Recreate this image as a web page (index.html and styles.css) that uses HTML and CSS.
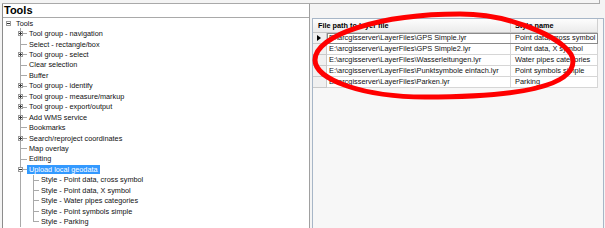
FILE: index.html
```html
<!DOCTYPE html>
<html>
<head>
<meta charset="utf-8">
<title>Tools</title>
<link rel="stylesheet" href="styles.css">
</head>
<body>
<div class="cap"></div>
<div class="main">
  <div class="left">
    <div class="title">Tools</div>
    <div class="tree">
      <div class="row root"><span class="box minus"></span><span class="label">Tools</span></div>
      <div class="row l1 has-box"><span class="box plus"></span><span class="label">Tool group - navigation</span></div>
      <div class="row l1"><span class="label">Select - rectangle/box</span></div>
      <div class="row l1 has-box"><span class="box plus"></span><span class="label">Tool group - select</span></div>
      <div class="row l1"><span class="label">Clear selection</span></div>
      <div class="row l1"><span class="label">Buffer</span></div>
      <div class="row l1 has-box"><span class="box plus"></span><span class="label">Tool group - identify</span></div>
      <div class="row l1 has-box"><span class="box plus"></span><span class="label">Tool group - measure/markup</span></div>
      <div class="row l1 has-box"><span class="box plus"></span><span class="label">Tool group - export/output</span></div>
      <div class="row l1 has-box"><span class="box plus"></span><span class="label">Add WMS service</span></div>
      <div class="row l1"><span class="label">Bookmarks</span></div>
      <div class="row l1 has-box"><span class="box plus"></span><span class="label">Search/reproject coordinates</span></div>
      <div class="row l1"><span class="label">Map overlay</span></div>
      <div class="row l1"><span class="label">Editing</span></div>
      <div class="row l1 has-box"><span class="box minus"></span><span class="label selected">Upload local geodata</span></div>
      <div class="row l2"><span class="label">Style - Point data, cross symbol</span></div>
      <div class="row l2"><span class="label">Style - Point data, X symbol</span></div>
      <div class="row l2"><span class="label">Style - Water pipes categories</span></div>
      <div class="row l2"><span class="label">Style - Point symbols simple</span></div>
      <div class="row l2 last"><span class="label">Style - Parking</span></div>
    </div>
  </div>
  <div class="right">
    <div class="grid">
      <div class="ghead">
        <div class="hc c1">File path to layer file</div>
        <div class="hc c2">Style name</div>
      </div>
      <div class="grow cur">
        <div class="rh"><span class="arrow"></span></div>
        <div class="data">
          <div class="cell c1">E:\arcgisserver\LayerFiles\GPS Simple.lyr</div>
          <div class="cell c2">Point data, cross symbol</div>
        </div>
      </div>
      <div class="grow">
        <div class="rh"></div>
        <div class="data">
          <div class="cell c1">E:\arcgisserver\LayerFiles\GPS Simple2.lyr</div>
          <div class="cell c2">Point data, X symbol</div>
        </div>
      </div>
      <div class="grow">
        <div class="rh"></div>
        <div class="data">
          <div class="cell c1">E:\arcgisserver\LayerFiles\Wasserleitungen.lyr</div>
          <div class="cell c2">Water pipes categories</div>
        </div>
      </div>
      <div class="grow">
        <div class="rh"></div>
        <div class="data">
          <div class="cell c1">E:\arcgisserver\LayerFiles\Punktsymbole einfach.lyr</div>
          <div class="cell c2">Point symbols simple</div>
        </div>
      </div>
      <div class="grow">
        <div class="rh"></div>
        <div class="data">
          <div class="cell c1">E:\arcgisserver\LayerFiles\Parken.lyr</div>
          <div class="cell c2">Parking</div>
        </div>
      </div>
    </div>
  </div>
</div>
<svg class="mark" width="605" height="228" viewBox="0 0 605 228" xmlns="http://www.w3.org/2000/svg">
  <path d="M 315 60 C 315 80, 364 97, 425 97 C 520 97, 573 86, 573 61 C 573 42, 515 14, 460 14 C 380 14, 315 35, 315 60 Z" fill="none" stroke="#ff0000" stroke-width="5"/>
</svg>
</body>
</html>
```
FILE: styles.css
```css
* {
  box-sizing: border-box;
}

html,
body {
  margin: 0;
}

body {
  width: 605px;
  height: 228px;
  overflow: hidden;
  position: relative;
  background: #f4f4f4;
  font-family: "Liberation Sans", Arial, sans-serif;
  color: #111;
}

.cap {
  margin-left: 2px;
  width: 598px;
  height: 4px;
  border-right: 1px solid #a9a9a9;
  border-bottom: 1px solid #a9a9a9;
}

.main {
  display: flex;
  padding-left: 2px;
  height: 224px;
}

/* left panel */
.left {
  width: 308px;
  background: #ffffff;
  border-left: 1px solid #8c8c8c;
  border-right: 1px solid #a0a0a0;
  display: flex;
  flex-direction: column;
}

.title {
  height: 14px;
  border-bottom: 1px solid #a9a9a9;
  font-weight: bold;
  font-size: 11px;
  line-height: 13px;
  padding-left: 1px;
  color: #000;
}

.tree {
  font-size: 7.3px;
  color: #111;
}

.row {
  display: flex;
  align-items: center;
  height: 10.45px;
  white-space: nowrap;
}

.label {
  padding: 0 2px;
  height: 9px;
  line-height: 9px;
}

.label.selected {
  background: #3399ff;
  color: #ffffff;
}

.box {
  width: 5px;
  height: 5px;
  border: 1px solid #9a9a9a;
  background-color: #ffffff;
  flex: none;
}

.box.minus {
  background: linear-gradient(#333, #333) 0 1px / 3px 1px no-repeat, #ffffff;
}

.box.plus {
  background: linear-gradient(#333, #333) 0 1px / 3px 1px no-repeat,
    linear-gradient(#333, #333) 1px 0 / 1px 3px no-repeat, #ffffff;
}

.root {
  padding-left: 3px;
}

.root .box {
  margin-right: 3px;
}

.l1 {
  padding-left: 24px;
  background: linear-gradient(#a9a9a9, #a9a9a9) 17px 0 / 1px 100% no-repeat,
    linear-gradient(#a9a9a9, #a9a9a9) 18px 5px / 6px 1px no-repeat;
}

.l1.has-box {
  padding-left: 15px;
}

.l1.has-box .box {
  margin-right: 4px;
}

.l2 {
  padding-left: 36px;
  background: linear-gradient(#a9a9a9, #a9a9a9) 17px 0 / 1px 100% no-repeat,
    linear-gradient(#a9a9a9, #a9a9a9) 30px 0 / 1px 100% no-repeat,
    linear-gradient(#a9a9a9, #a9a9a9) 31px 5px / 5px 1px no-repeat;
}

.l2.last {
  background: linear-gradient(#a9a9a9, #a9a9a9) 17px 0 / 1px 100% no-repeat,
    linear-gradient(#a9a9a9, #a9a9a9) 30px 0 / 1px 6px no-repeat,
    linear-gradient(#a9a9a9, #a9a9a9) 31px 5px / 5px 1px no-repeat;
}

/* right panel */
.right {
  flex: 1;
  padding: 14px 0 0 2px;
}

.grid {
  width: 292px;
  height: 100%;
  border: 1px solid #a7b6c7;
  border-bottom: none;
  background: #f7f7f7;
  font-size: 7.4px;
}

.ghead {
  display: flex;
  height: 14px;
}

.hc {
  background: linear-gradient(#fdfdfd, #ebebeb);
  border-right: 1px solid #d0d0d0;
  border-bottom: 1px solid #c6c6c6;
  font-weight: bold;
  font-size: 7.3px;
  line-height: 13px;
  color: #000;
  white-space: nowrap;
}

.hc.c1 {
  width: 198px;
  padding-left: 5px;
}

.hc.c2 {
  width: 87px;
  padding-left: 4px;
}

.grow {
  display: flex;
  height: 11px;
}

.rh {
  width: 14px;
  background: #f0f0f0;
  border-right: 1px solid #c9c9c9;
  border-bottom: 1px solid #c9c9c9;
  display: flex;
  align-items: center;
  padding-left: 4px;
}

.arrow {
  width: 0;
  height: 0;
  border-left: 4px solid #000;
  border-top: 3px solid transparent;
  border-bottom: 3px solid transparent;
}

.data {
  display: flex;
}

.cur .data {
  outline: 1px solid #8a8a8a;
  outline-offset: -1px;
}

.cell {
  background: #ffffff;
  border-right: 1px solid #d6d6d6;
  border-bottom: 1px solid #d6d6d6;
  line-height: 10px;
  white-space: nowrap;
  overflow: hidden;
  color: #111;
}

.cell.c1 {
  width: 184px;
  padding-left: 2px;
}

.cell.c2 {
  width: 87px;
  padding-left: 4px;
}

.mark {
  position: absolute;
  left: 0;
  top: 0;
  pointer-events: none;
}
```
